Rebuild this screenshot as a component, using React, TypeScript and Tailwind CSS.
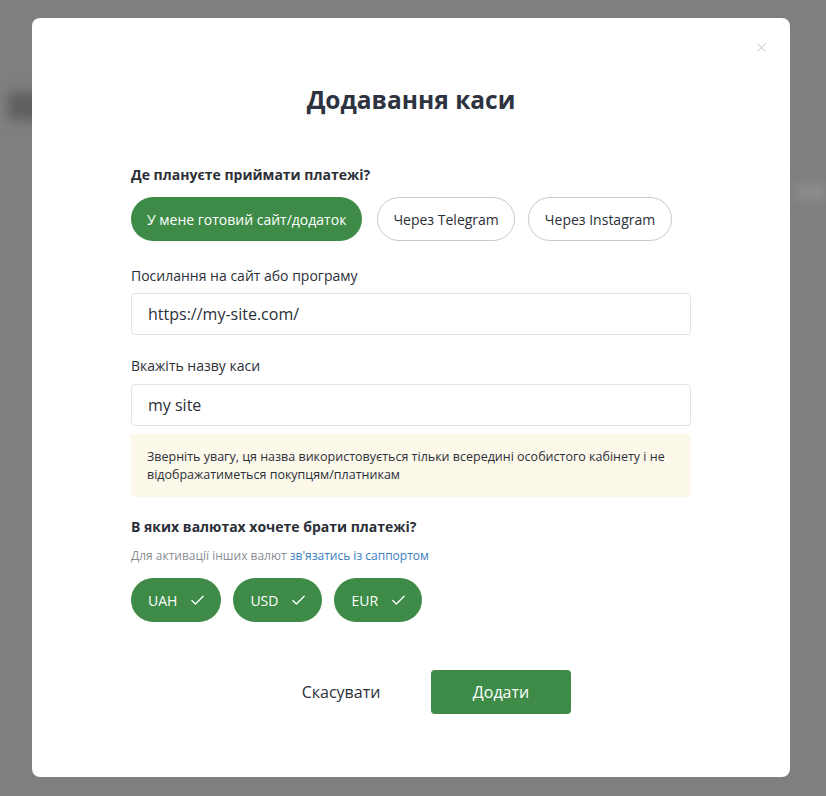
import React from 'react';
import { Check, X } from 'lucide-react';

const font = { fontFamily: '"Open Sans", "Noto Sans", sans-serif' };

const sources = ['У мене готовий сайт/додаток', 'Через Telegram', 'Через Instagram'];
const currencies = ['UAH', 'USD', 'EUR'];

export default function App() {
  return (
    <div className="relative w-[826px] h-[796px] overflow-hidden bg-[#7f7f7f]" style={font}>
      {/* blurred page behind the overlay */}
      <div className="absolute left-[8px] top-[92px] w-[40px] h-[28px] rounded bg-[#5f5f5f] blur-[6px]" />
      <div className="absolute right-0 top-[182px] w-[30px] h-[20px] bg-[#8a8a8a] blur-[4px]" />

      <div className="relative ml-[32px] mt-[18px] w-[758px] h-[759px] rounded-lg bg-white px-[99px] pt-[66px] text-[#2b2f38]">
        <button className="absolute right-[21px] top-[22px] text-[#b5b5b5]">
          <X size={15} strokeWidth={1.3} />
        </button>

        <h1 className="text-center text-[24.5px] font-bold leading-[32px] text-[#2d3340]">Додавання каси</h1>

        <div className="mt-[49px] text-[14px] font-bold leading-[20px]">Де плануєте приймати платежі?</div>
        <div className="mt-[12px] flex">
          <button className="h-[44px] rounded-full bg-[#3e8b47] px-[16px] text-[14px] text-white">{sources[0]}</button>
          <button className="ml-[15px] h-[44px] rounded-full border border-[#c9c9c9] bg-white px-[15px] text-[14px]">
            {sources[1]}
          </button>
          <button className="ml-[13px] h-[44px] rounded-full border border-[#c9c9c9] bg-white px-[16px] text-[14px]">
            {sources[2]}
          </button>
        </div>

        <div className="mt-[25px] text-[14px] leading-[20px]">Посилання на сайт або програму</div>
        <div className="mt-[7px] flex h-[42px] items-center rounded border border-[#e3e3e3] px-[16px] text-[16px]">
          https://my-site.com/
        </div>

        <div className="mt-[21px] text-[14px] leading-[20px]">Вкажіть назву каси</div>
        <div className="mt-[8px] flex h-[42px] items-center rounded border border-[#e3e3e3] px-[16px] text-[16px]">
          my site
        </div>

        <div className="mt-[8px] bg-[#fdf9ea] px-[16px] py-[14px] text-[12.5px] leading-[17.5px]">
          Зверніть увагу, ця назва використовується тільки всередині особистого кабінету і не відображатиметься покупцям/платникам
        </div>

        <div className="mt-[20px] text-[14px] font-bold leading-[20px]">В яких валютах хочете брати платежі?</div>
        <div className="mt-[10px] text-[12px] leading-[18px] text-[#8a8d93]">
          Для активації інших валют <span className="text-[#3a7dbf]">зв'язатись із саппортом</span>
        </div>
        <div className="mt-[13px] flex gap-[12px]">
          {currencies.map((c) => (
            <div key={c} className="flex h-[44px] items-center gap-[12px] rounded-full bg-[#3e8b47] pl-[17px] pr-[15px] text-[14px] text-white">
              {c}
              <Check size={17} strokeWidth={1.8} />
            </div>
          ))}
        </div>

        <div className="mt-[48px] flex items-center gap-[20px] pl-[140px]">
          <button className="h-[44px] w-[140px] text-[16px]">Скасувати</button>
          <button className="h-[44px] w-[140px] rounded bg-[#3e8b47] text-[16px] text-white">Додати</button>
        </div>
      </div>
    </div>
  );
}
